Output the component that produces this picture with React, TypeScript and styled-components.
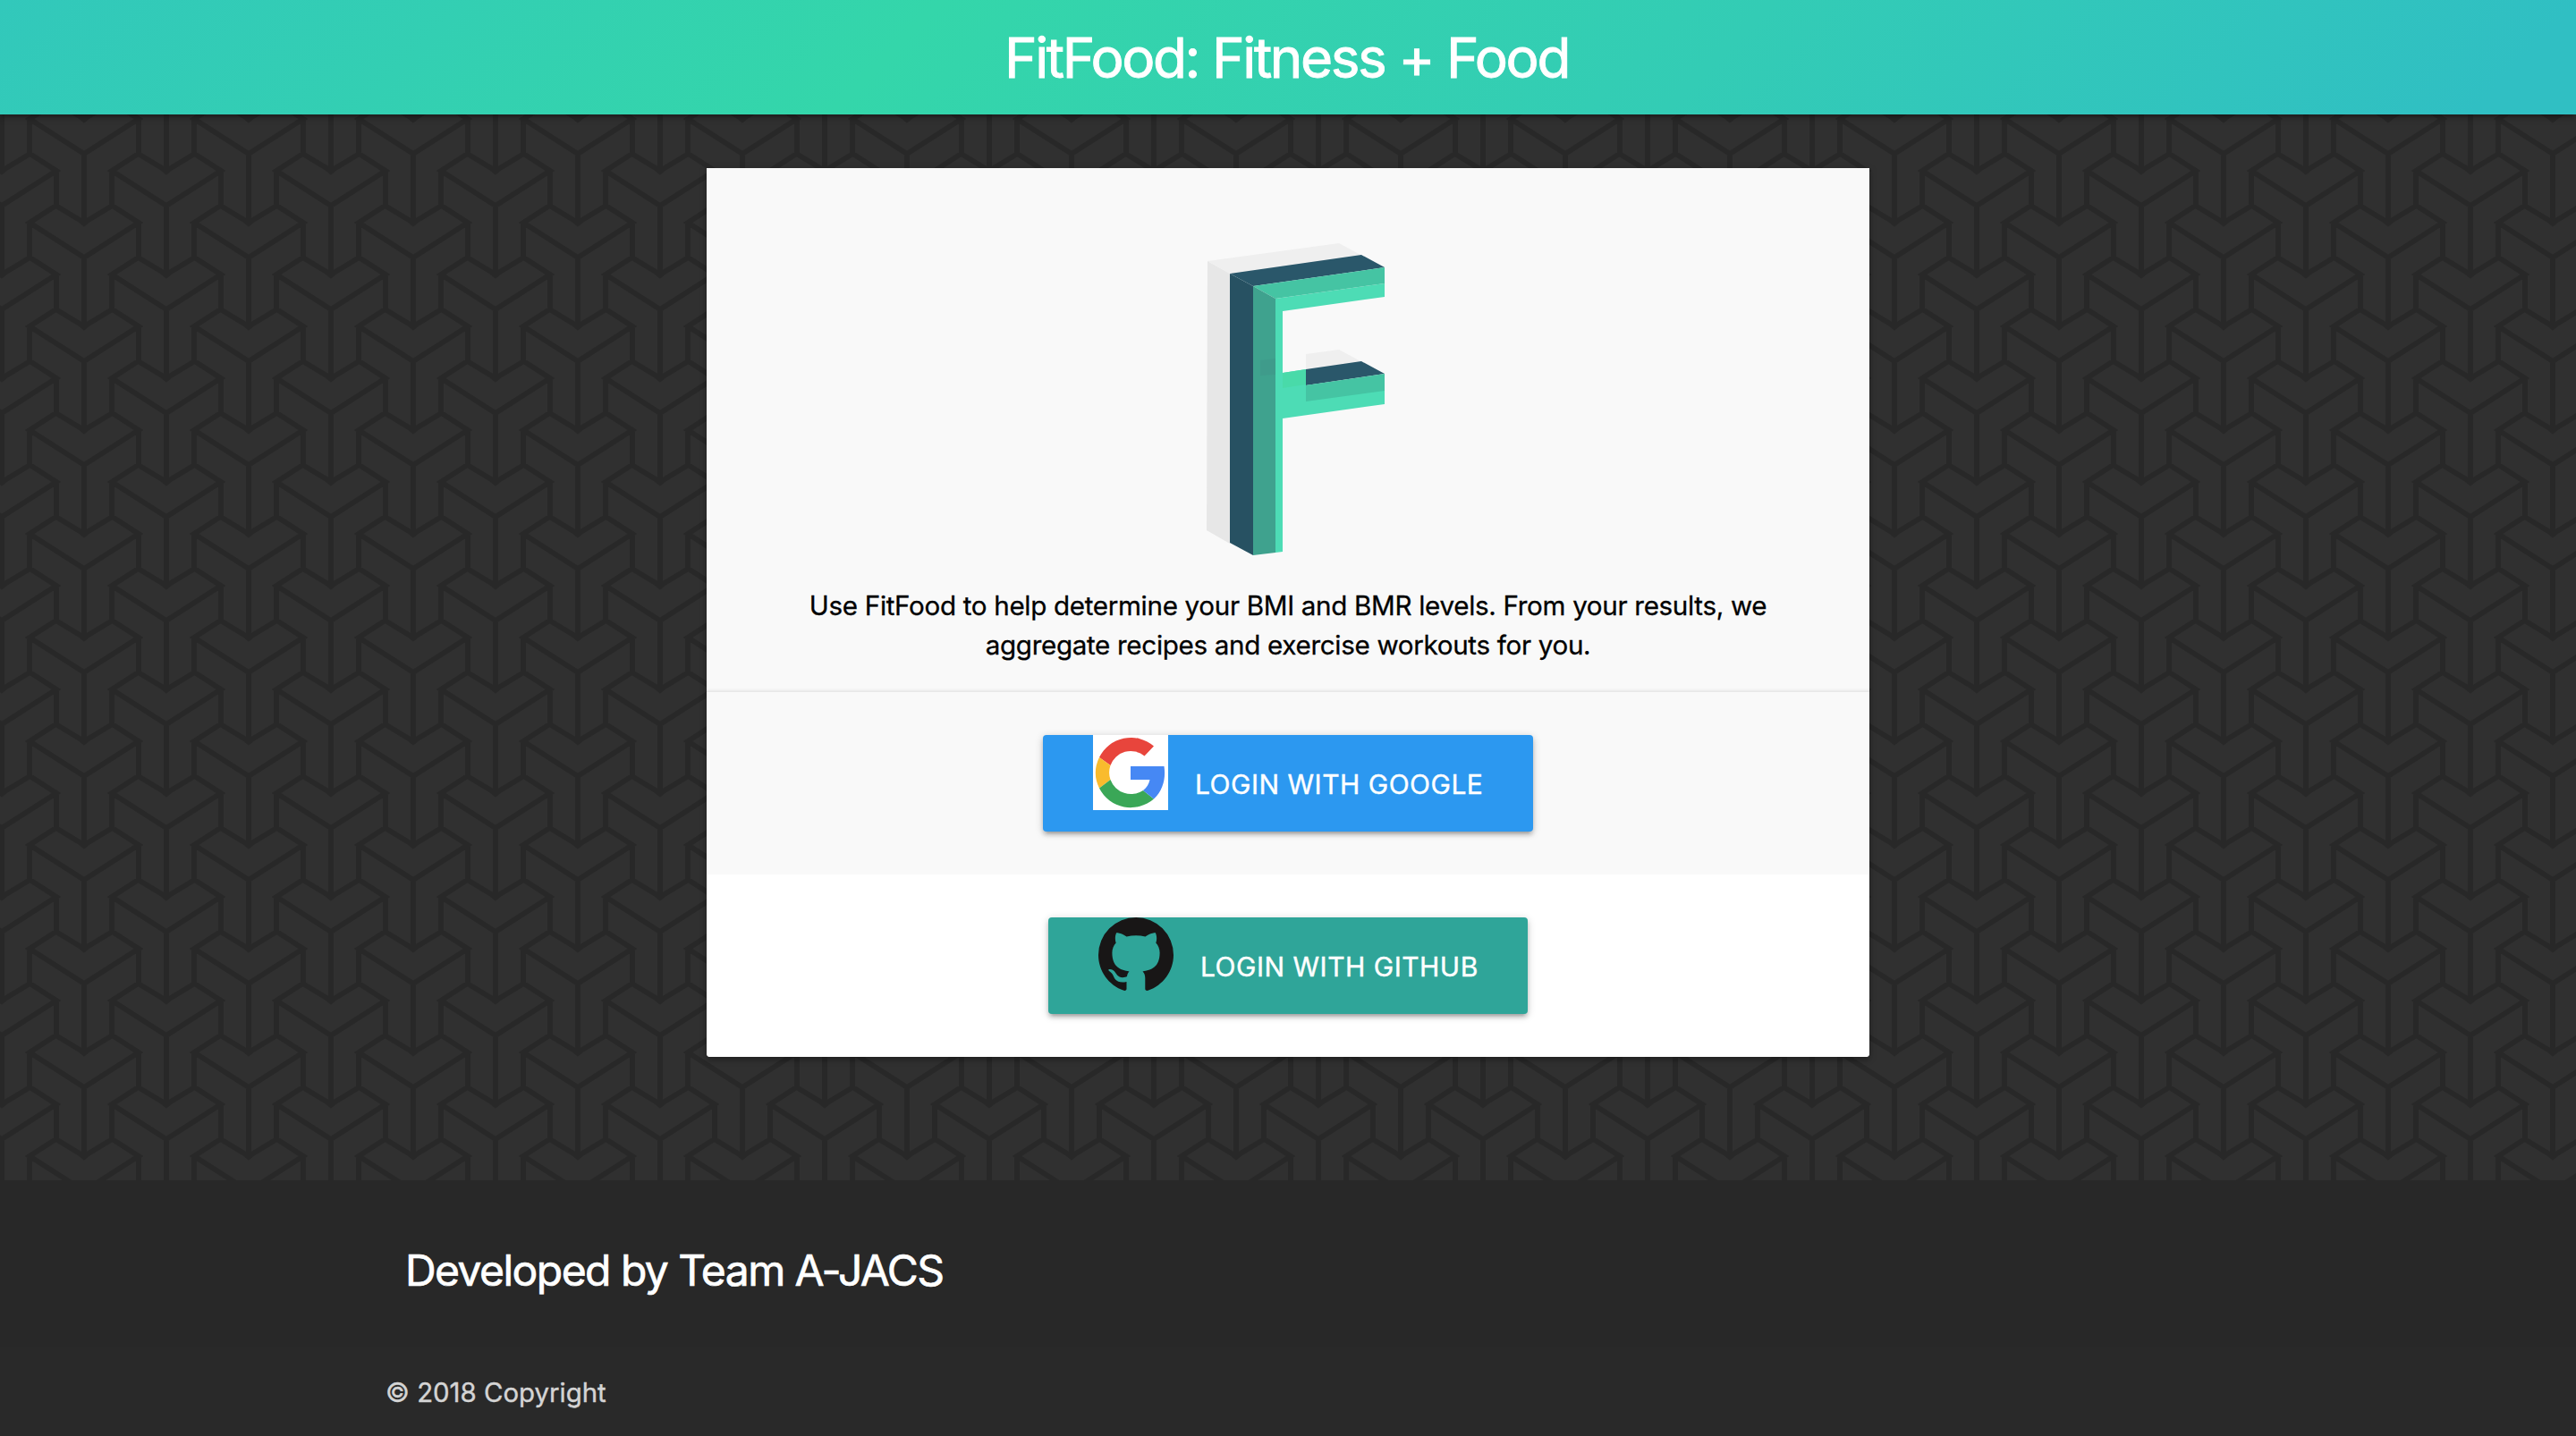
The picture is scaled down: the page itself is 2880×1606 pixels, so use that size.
import React from "react";
import styled, { createGlobalStyle } from "styled-components";

const chevron = (cx: number, y: number) =>
  `M${cx - 61} ${y}L${cx - 31.5} ${y - 19}L${cx} ${y}L${cx + 31.5} ${y - 19}L${cx + 61} ${y}L${cx} ${y + 39}Z` +
  `M${cx} ${y + 39}V${y + 116}M${cx - 61} ${y}V${y + 39}M${cx + 61} ${y}V${y + 39}` +
  `M${cx - 5} ${y - 3}L${cx} ${y + 1}L${cx + 5} ${y - 3}`;

const tilePath = [
  [94, -99], [94, 17], [94, 133],
  [186, -41], [186, 75], [186, -157],
  [2, -41], [2, 75], [2, -157],
].map(([x, y]) => chevron(x, y)).join("");

const tile = `url("data:image/svg+xml,${encodeURIComponent(
  `<svg xmlns="http://www.w3.org/2000/svg" width="184" height="116"><rect width="184" height="116" fill="#303030"/><path d="${tilePath}" fill="none" stroke="#282828" stroke-width="6"/></svg>`
)}")`;

const GlobalStyle = createGlobalStyle`
  * { box-sizing: border-box; }
  body {
    margin: 0;
    background: #303030 ${tile};
    font-family: Inter, "Liberation Sans", sans-serif;
    color: #000;
  }
`;

const Page = styled.div`
  display: flex;
  flex-direction: column;
  height: 1606px;
  overflow: hidden;
`;

const Header = styled.header`
  display: flex;
  justify-content: center;
  align-items: center;
  flex: none;
  height: 128px;
  background: linear-gradient(135deg, #32c8bb 0%, #34d6aa 35%, #33ccb5 66%, #30bfc3 96%, #30bfc3 100%);
  box-shadow: 0 4px 4px rgba(0, 0, 0, 0.14), 0 6px 2px -4px rgba(0, 0, 0, 0.12), 0 2px 10px rgba(0, 0, 0, 0.2);
`;

const Title = styled.h1`
  margin: 0;
  padding: 1px 3px 0 0;
  font-size: 62px;
  font-weight: 400;
  letter-spacing: -2.4px;
  line-height: 124px;
  color: #fff;
  -webkit-text-stroke: 0.9px #fff;
`;

const Main = styled.main`
  flex: 1;
  display: flex;
  justify-content: center;
  align-items: flex-start;
  padding-top: 60px;
`;

const Card = styled.section`
  width: 1300px;
  background: #fff;
  border-radius: 0 0 4px 4px;
  overflow: hidden;
  box-shadow: 0 4px 4px rgba(0, 0, 0, 0.14), 0 2px 10px rgba(0, 0, 0, 0.2);
`;

const Intro = styled.div`
  display: flex;
  flex-direction: column;
  align-items: center;
  height: 586px;
  padding-top: 76px;
  background: #f9f9f9;
  box-shadow: inset 0 -4px 4px -3px rgba(0, 0, 0, 0.12);
`;

const Logo = styled.svg`
  display: block;
  width: 260px;
  height: 376px;
  margin-left: 20px;
`;

const Blurb = styled.p`
  width: 1120px;
  margin: 15px 0 0;
  font-size: 29.6px;
  letter-spacing: -0.32px;
  line-height: 44px;
  text-align: center;
  -webkit-text-stroke: 0.3px #000;
`;

const LoginRow = styled.div<{ $tint: string }>`
  display: flex;
  justify-content: center;
  align-items: flex-start;
  height: 204px;
  padding-top: 48px;
  background: ${(p) => p.$tint};
`;

const LoginButton = styled.button<{ $color: string; $width: number }>`
  display: flex;
  align-items: flex-start;
  gap: 30px;
  width: ${(p) => p.$width}px;
  height: 108px;
  padding: 0 0 0 56px;
  border: 0;
  border-radius: 4px;
  background: ${(p) => p.$color};
  color: #fff;
  font: 400 30px/108px Inter, "Liberation Sans", sans-serif;
  letter-spacing: 0.5px;
  white-space: nowrap;
  -webkit-text-stroke: 0.4px #fff;
  box-shadow: 0 4px 4px rgba(0, 0, 0, 0.14), 0 6px 2px -4px rgba(0, 0, 0, 0.12), 0 2px 10px rgba(0, 0, 0, 0.2);
`;

const Label = styled.span`
  padding-top: 1px;
`;

const BrandIcon = styled.svg<{ $back?: string }>`
  flex: none;
  width: 84px;
  height: 84px;
  background: ${(p) => p.$back ?? "transparent"};
`;

const Footer = styled.footer`
  flex: none;
  height: 286px;
  background: #282828;
  color: #fff;
`;

const Credits = styled.h2`
  margin: 0;
  height: 187px;
  padding: 1px 0 0 453px;
  font-size: 48px;
  font-weight: 400;
  letter-spacing: -1.55px;
  line-height: 200px;
  -webkit-text-stroke: 0.7px #fff;
`;

const Copyright = styled.div`
  height: 99px;
  padding-left: 431px;
  background: #292929;
  color: #d4d4d4;
  font-size: 29.4px;
  line-height: 102px;
  -webkit-text-stroke: 0.4px #d4d4d4;
`;

function FitFoodLogo() {
  return (
    <Logo viewBox="0 24 260 376">
      <path fill="#e7e7e7" d="M30 52L55 66V368L29 353Z" />
      <path fill="#efefef" d="M30 52L177 32L203 46L55 66Z M140 156L177 151L203 165L140 174Z" />
      <path fill="#275162" d="M55 66L81 80V381L55 367Z" />
      <path fill="#2a576a" d="M55 66L202 45L228 59L81 80Z M140 173L202 164L228 178L140 191Z" />
      <path fill="#4ddcb5" d="M106 94L228 77V92L114 108V177L140 173V191L228 179V212L114 228V377L106 378Z" />
      <path fill="#45c4a3" d="M81 80L228 59V77L106 94Z M140 191L228 178V197L140 209Z" />
      <path fill="#49daa9" d="M114 177L140 173V190L114 194Z" />
      <path fill="#3fa28e" d="M81 80L106 94V378L81 381Z" />
      <path fill="#3f9b8b" d="M89 163L106 161V179L89 180Z" />
    </Logo>
  );
}

function GoogleIcon() {
  return (
    <BrandIcon viewBox="0 0 84 84" $back="#fff">
      <path fill="#e8453c" d="M7 25A39.2 39.2 0 0 1 68 12.5L57.5 23.5A24 24 0 0 0 19.5 34Z" />
      <path fill="#f9bb2d" d="M7 25A39.5 39.5 0 0 0 7 59.5L19.5 50A24 24 0 0 1 19.5 34Z" />
      <path fill="#3aa757" d="M7 59.5A39.4 39.4 0 0 0 68 71.5L56 62A24.5 24.5 0 0 1 19.5 50Z" />
      <path fill="#4688f4" d="M42 35H79.5C81.500 48 78.500 62 68 71.500L56 62C60 59 62.500 55 63.500 50H42Z" />
    </BrandIcon>
  );
}

function GithubIcon() {
  return (
    <BrandIcon viewBox="0 0 84 84">
      <path
        fill="#181616"
        d="M42 0A42 42 0 0 0 0 42C0 60 11.500 76 28.500 81.800C30.500 82.200 31.500 81.200 31.500 79.700V72C20 74.500 17.500 67 17.500 67C15.500 62 13 60.800 13 60.800C9 58 13 58 13 58C17.500 58.300 19.500 62.500 19.500 62.500C23.500 69 29.500 67.200 32 66C32.300 63.200 33.300 61.500 34.500 60.400C25 59.300 15.400 55.800 15.400 39.600C15.400 35 17 31.300 19.700 28.400C19.300 27.300 17.800 23 20.100 17.300C20.100 17.300 23.600 16.100 31.500 21.600A40 40 0 0 1 52.500 21.600C60.400 16.100 63.900 17.300 63.900 17.300C66.200 23 64.700 27.300 64.300 28.400C67 31.300 68.600 35 68.600 39.600C68.600 55.800 59 59.300 49.500 60.400C51 61.700 52.300 64.200 52.300 68V79.700C52.300 81.200 53.300 82.200 55.500 81.800C72.500 76 84 60 84 42A42 42 0 0 0 42 0Z"
      />
    </BrandIcon>
  );
}

export default function App() {
  return (
    <Page>
      <GlobalStyle />
      <Header>
        <Title>FitFood: Fitness + Food</Title>
      </Header>
      <Main>
        <Card>
          <Intro>
            <FitFoodLogo />
            <Blurb>
              Use FitFood to help determine your BMI and BMR levels. From your results, we
              <br />
              aggregate recipes and exercise workouts for you.
            </Blurb>
          </Intro>
          <LoginRow $tint="#f9f9f9">
            <LoginButton $color="#2c98f0" $width={548}>
              <GoogleIcon />
              <Label>LOGIN WITH GOOGLE</Label>
            </LoginButton>
          </LoginRow>
          <LoginRow $tint="#fff">
            <LoginButton $color="#2fa599" $width={536}>
              <GithubIcon />
              <Label>LOGIN WITH GITHUB</Label>
            </LoginButton>
          </LoginRow>
        </Card>
      </Main>
      <Footer>
        <Credits>Developed by Team A-JACS</Credits>
        <Copyright>© 2018 Copyright</Copyright>
      </Footer>
    </Page>
  );
}
